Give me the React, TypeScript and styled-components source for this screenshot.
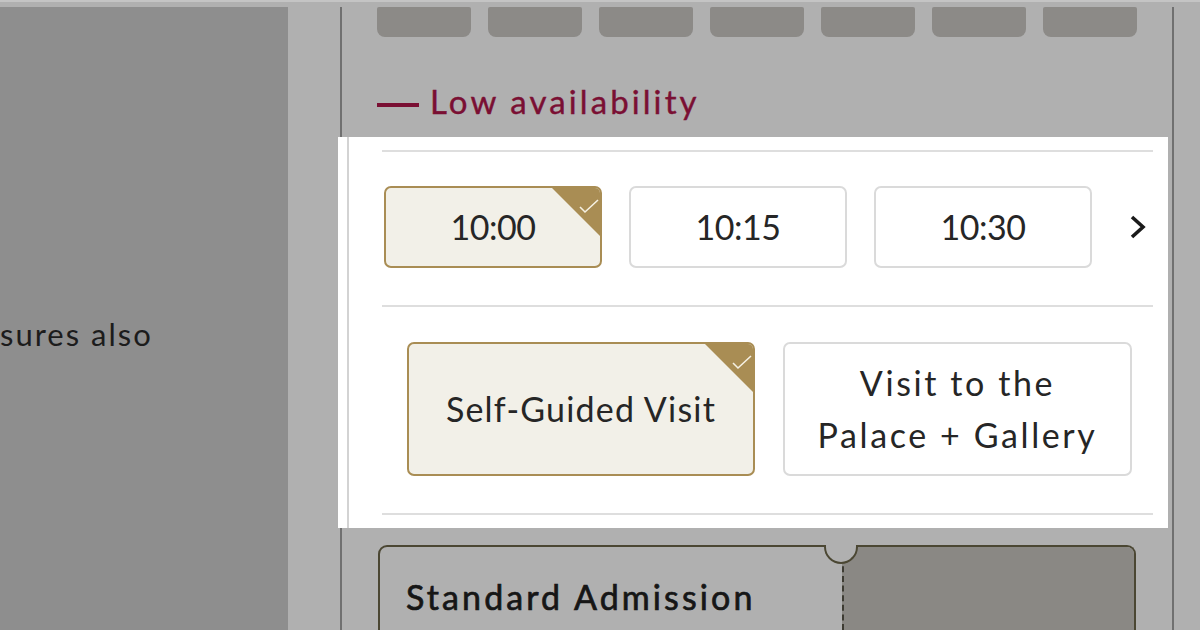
import React from 'react'
import styled, { createGlobalStyle } from 'styled-components'

const GlobalStyle = createGlobalStyle`
  html, body {
    margin: 0;
    padding: 0;
    background: #b0b0b0;
    font-family: Lato, "Open Sans", sans-serif;
  }
  * { box-sizing: border-box; }
`

const Page = styled.div`
  display: flex;
  width: 1200px;
  height: 630px;
  overflow: hidden;
  background: #b0b0b0;
  border-top: 2px solid #c4c4c4;
  padding-top: 5px;
`

const LeftPanel = styled.div`
  width: 288px;
  flex-shrink: 0;
  margin-right: 52px;
  background: #8e8e8e;
  padding-top: 307px;
`

const LeftText = styled.p`
  margin: 0;
  font-size: 31px;
  line-height: 40px;
  letter-spacing: 2px;
  color: #1c1c1c;
  white-space: nowrap;
`

const MainColumn = styled.div`
  width: 834px;
  flex-shrink: 0;
  border-left: 2px solid #707070;
  border-right: 2px solid #707070;
  display: flex;
  flex-direction: column;
`

const DaysRow = styled.div`
  display: flex;
  gap: 17px;
  padding-left: 35px;
`

const DayTile = styled.div`
  width: 94px;
  height: 30px;
  background: #8c8a87;
  border-radius: 2px 2px 8px 8px;
`

const Legend = styled.div`
  display: flex;
  align-items: center;
  margin-top: 44px;
  padding-left: 35px;
  height: 40px;
  font-size: 33px;
  line-height: 40px;
  letter-spacing: 3.1px;
  color: #7a0f33;
  -webkit-text-stroke: 0.4px #7a0f33;
`

const LegendDash = styled.span`
  width: 42px;
  height: 4px;
  margin: 7px 11px 0 0;
  background: #7a0f33;
`

const Spotlight = styled.div`
  margin: 16px 0 0 -4px;
  width: 830px;
  background: #ffffff;
`

const SpotlightInner = styled.div`
  margin-left: 9px;
  border-left: 2px solid #d3d3d3;
  padding: 13px 15px 13px 33px;
`

const Divider = styled.div`
  height: 2px;
  background: #dedede;
`

const TimeRow = styled.div`
  display: flex;
  align-items: center;
  gap: 27px;
  margin: 34px 0 37px;
  padding-left: 2px;
`

const TypeRow = styled.div`
  display: flex;
  gap: 28px;
  margin: 35px 0 37px;
  padding-left: 25px;
`

const Choice = styled.div<{ $selected?: boolean; $w: number; $h: number; $tracking: number }>`
  position: relative;
  overflow: hidden;
  width: ${p => p.$w}px;
  height: ${p => p.$h}px;
  display: flex;
  align-items: center;
  justify-content: center;
  text-align: center;
  border-radius: 7px;
  border: 2px solid ${p => (p.$selected ? '#a98d54' : '#dadada')};
  background: ${p => (p.$selected ? '#f2f0e8' : '#ffffff')};
  color: #262626;
  font-size: 34px;
  line-height: 52px;
  letter-spacing: ${p => p.$tracking}px;
`

const Corner = styled.svg`
  position: absolute;
  top: -2px;
  right: -2px;
`

const Chevron = styled.svg`
  margin-left: 10px;
  flex-shrink: 0;
`

const TicketCard = styled.div`
  position: relative;
  display: flex;
  margin: 17px 0 0 36px;
  width: 758px;
  height: 120px;
  border: 2px solid #4b4733;
  border-bottom: none;
  border-radius: 9px 9px 0 0;
`

const TicketMain = styled.div`
  width: 462px;
  padding: 30px 0 0 26px;
  font-size: 34px;
  line-height: 40px;
  letter-spacing: 3.1px;
  color: #161616;
  -webkit-text-stroke: 0.7px #161616;
  white-space: nowrap;
`

const TicketStub = styled.div`
  flex: 1;
  background: #8a8884;
  border-left: 2px dashed #3e3c33;
  border-top-right-radius: 7px;
`

const Notch = styled.div`
  position: absolute;
  top: -2px;
  left: 444px;
  width: 34px;
  height: 19px;
  background: #b0b0b0;
  border: 2px solid #4b4733;
  border-top: none;
  border-radius: 0 0 17px 17px;
`

function SelectedCorner() {
  return (
    <Corner width="52" height="52" viewBox="0 0 52 52">
      <polygon points="0,0 52,0 52,52" fill="#a98d54" />
      <polyline points="30,21 35,26 48,14" fill="none" stroke="#f5f0e2" strokeWidth="1.6" />
    </Corner>
  )
}

const times = ['10:00', '10:15', '10:30']

export default function App() {
  return (
    <>
      <GlobalStyle />
      <Page>
        <LeftPanel>
          <LeftText>sures also</LeftText>
        </LeftPanel>
        <MainColumn>
          <DaysRow>
            {Array.from({ length: 7 }).map((_, i) => (
              <DayTile key={i} />
            ))}
          </DaysRow>
          <Legend>
            <LegendDash />
            Low availability
          </Legend>
          <Spotlight>
            <SpotlightInner>
              <Divider />
              <TimeRow>
                {times.map((t, i) => (
                  <Choice key={t} $selected={i === 0} $w={218} $h={82} $tracking={-0.5}>
                    {t}
                    {i === 0 && <SelectedCorner />}
                  </Choice>
                ))}
                <Chevron width="18" height="26" viewBox="0 0 18 26">
                  <polyline points="3,3 14,13 3,23" fill="none" stroke="#1a1a1a" strokeWidth="3.6" strokeLinejoin="miter" />
                </Chevron>
              </TimeRow>
              <Divider />
              <TypeRow>
                <Choice $selected $w={348} $h={134} $tracking={1.2}>
                  Self-Guided Visit
                  <SelectedCorner />
                </Choice>
                <Choice $w={349} $h={134} $tracking={2.6}>
                  Visit to the
                  <br />
                  Palace + Gallery
                </Choice>
              </TypeRow>
              <Divider />
            </SpotlightInner>
          </Spotlight>
          <TicketCard>
            <TicketMain>Standard Admission</TicketMain>
            <TicketStub />
            <Notch />
          </TicketCard>
        </MainColumn>
      </Page>
    </>
  )
}
